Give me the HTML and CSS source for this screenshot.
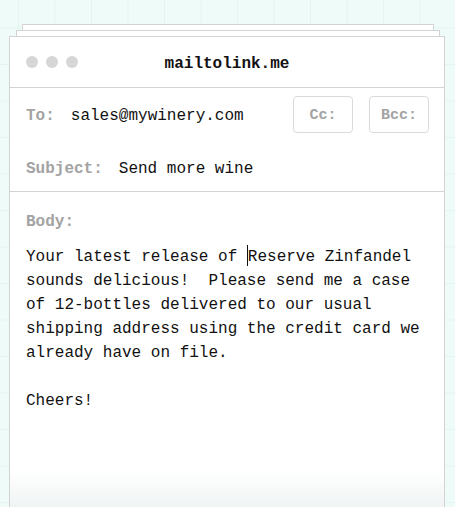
FILE: index.html
```html
<!DOCTYPE html>
<html lang="en">
<head>
    <meta charset="UTF-8">
    <meta name="viewport" content="width=device-width, initial-scale=1.0">
    <title>mailtolink.me</title>
    <link rel="stylesheet" href="styles.css">
</head>
<body>
    <section class="stage">
        <div class="sheet sheet-back"></div>
        <div class="sheet sheet-mid"></div>
        <div class="window">
            <header class="titlebar">
                <div class="dots"><span></span><span></span><span></span></div>
                <h1 class="title">mailtolink.me</h1>
            </header>
            <div class="fields">
                <div class="row">
                    <span class="label">To:</span>
                    <span class="value">sales@mywinery.com</span>
                    <div class="extras">
                        <button class="btn">Cc:</button>
                        <button class="btn">Bcc:</button>
                    </div>
                </div>
                <div class="row">
                    <span class="label">Subject:</span>
                    <span class="value">Send more wine</span>
                </div>
            </div>
            <div class="compose">
                <div class="label">Body:</div>
                <p class="message">Your latest release of <span class="caret"></span>Reserve Zinfandel sounds delicious!  Please send me a case of 12-bottles delivered to our usual shipping address using the credit card we already have on file.

Cheers!</p>
            </div>
        </div>
    </section>
</body>
</html>
```

FILE: styles.css
```css
* {
    margin: 0;
    padding: 0;
    box-sizing: border-box;
}
body {
    height: 100vh;
    overflow: hidden;
    background-color: #effbf8;
    background-image:
        linear-gradient(to right, #e2f5ef 1px, transparent 1px),
        linear-gradient(to bottom, #e2f5ef 1px, transparent 1px);
    background-size: 36.5px 36.5px;
    background-position: 18px 27.5px;
    font-family: "Liberation Mono", "DejaVu Sans Mono", monospace;
    color: #111;
}
.stage {
    height: 100%;
    display: flex;
    flex-direction: column;
    padding-top: 24px;
}
.sheet {
    height: 6px;
    background: #fff;
    border: 1px solid #d3d3d3;
    border-bottom: none;
}
.sheet-back {
    margin: 0 21px 0 22px;
}
.sheet-mid {
    margin: 0 15px 0 16px;
}
.window {
    flex: 1;
    position: relative;
    margin: 0 10px 0 9px;
    background: #fff;
    border: 1px solid #d3d3d3;
    border-bottom: none;
}
.window::after {
    content: "";
    position: absolute;
    left: 0;
    right: 0;
    bottom: 0;
    height: 36px;
    background: linear-gradient(to bottom, rgba(255,255,255,0), rgba(222,230,230,0.45));
}
.titlebar {
    height: 51px;
    display: grid;
    grid-template-columns: 1fr auto 1fr;
    align-items: center;
    border-bottom: 1px solid #d3d3d3;
}
.dots {
    display: flex;
    gap: 8px;
    padding-left: 16px;
}
.dots span {
    width: 12px;
    height: 12px;
    border-radius: 50%;
    background: #d6d6d6;
}
.title {
    padding-top: 3px;
    font-size: 16px;
    font-weight: bold;
    color: #111;
}
.fields {
    display: flex;
    flex-direction: column;
    gap: 16px;
    padding: 8px 15px 5px 16px;
    border-bottom: 1px solid #d3d3d3;
}
.row {
    height: 37px;
    display: flex;
    align-items: center;
    gap: 16px;
}
.row .label,
.row .value {
    padding-top: 3px;
}
.label {
    font-size: 16px;
    font-weight: bold;
    color: #a3a3a3;
}
.value {
    font-size: 16px;
}
.extras {
    margin-left: auto;
    display: flex;
    gap: 16px;
}
.btn {
    width: 60px;
    height: 37px;
    padding-top: 1px;
    background: #fff;
    border: 1px solid #dadada;
    border-radius: 4px;
    font-family: inherit;
    font-size: 15px;
    font-weight: bold;
    color: #a3a3a3;
}
.compose {
    padding: 19px 16px 0 16px;
}
.compose .label {
    line-height: 22px;
}
.message {
    margin-top: 12px;
    font-size: 16px;
    line-height: 24px;
    white-space: pre-wrap;
}
.caret {
    display: inline-block;
    width: 0;
    height: 21px;
    vertical-align: -5px;
    border-left: 1px solid #111;
}
```
